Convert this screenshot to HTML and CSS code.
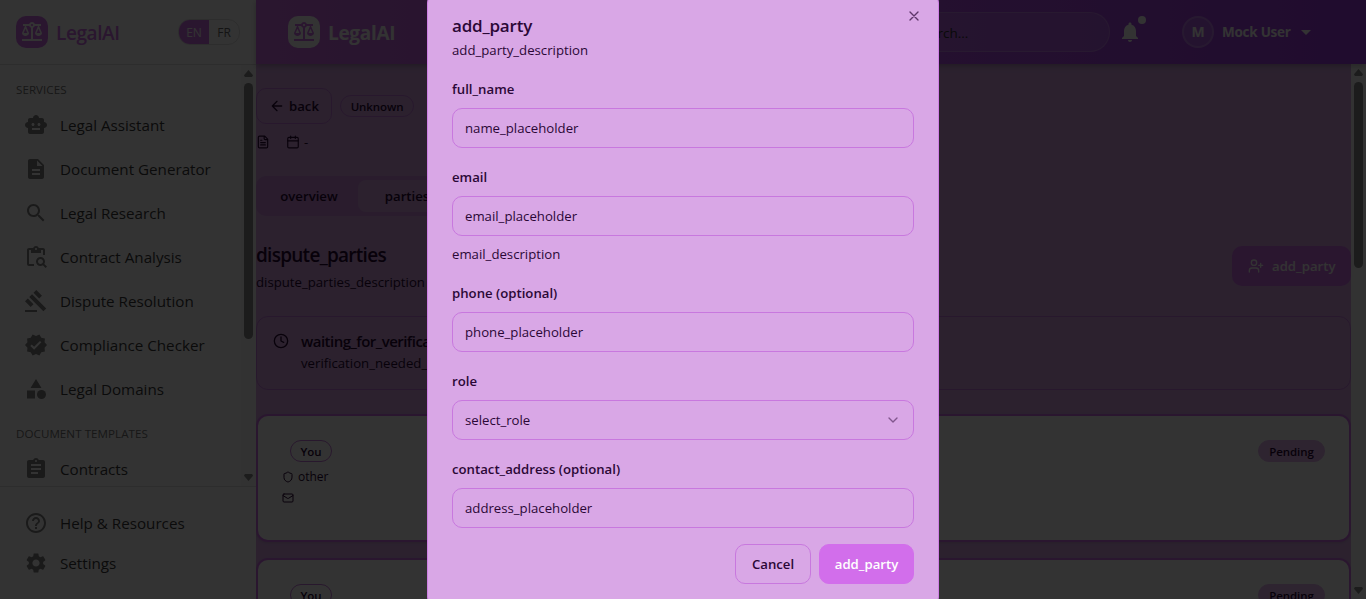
FILE: index.html
```html
<!DOCTYPE html>
<html lang="en">
<head>
<meta charset="utf-8">
<title>LegalAI</title>
<link rel="stylesheet" href="styles.css">
</head>
<body>
<svg class="defs" width="0" height="0">
  <symbol id="balance" viewBox="0 0 24 24"><path d="M13 7.83c.85-.3 1.53-.98 1.83-1.83H18l-3 7c0 1.66 1.57 3 3.5 3s3.5-1.34 3.5-3l-3-7h2V4h-6.17c-.41-1.17-1.52-2-2.83-2s-2.42.83-2.83 2H3v2h2l-3 7c0 1.66 1.57 3 3.5 3S9 14.66 9 13L6 6h3.17c.3.85.98 1.53 1.83 1.83V19H2v2h20v-2h-9zM20.37 13h-3.74l1.87-4.36zm-13 0H3.63L5.5 8.64zM12 6c-.55 0-1-.45-1-1s.45-1 1-1 1 .45 1 1-.45 1-1 1"/></symbol>
  <symbol id="shield" viewBox="0 0 24 24"><path d="M20 13c0 5-3.5 7.5-7.66 8.95a1 1 0 0 1-.67-.01C7.5 20.5 4 18 4 13V6a1 1 0 0 1 1-1c2 0 4.5-1.2 6.24-2.72a1.17 1.17 0 0 1 1.52 0C14.51 3.81 17 5 19 5a1 1 0 0 1 1 1z"/></symbol>
  <symbol id="mail" viewBox="0 0 24 24"><rect x="2" y="4" width="20" height="16" rx="2"/><path d="m22 7-8.97 5.7a1.94 1.94 0 0 1-2.06 0L2 7"/></symbol>
</svg>
<div class="app">
  <aside class="sidebar">
    <div class="side-head">
      <span class="logo"><svg class="mi"><use href="#balance"/></svg></span>
      <span class="brand">LegalAI</span>
      <div class="lang"><span class="on">EN</span><span>FR</span></div>
    </div>
    <div class="side-body">
      <nav class="side-nav">
        <h6 class="cap">SERVICES</h6>
        <a class="item"><svg class="mi" viewBox="0 0 24 24"><path d="M20 9V7c0-1.1-.9-2-2-2h-3c0-1.66-1.34-3-3-3S9 3.34 9 5H6c-1.1 0-2 .9-2 2v2c-1.66 0-3 1.34-3 3s1.34 3 3 3v4c0 1.1.9 2 2 2h12c1.1 0 2-.9 2-2v-4c1.66 0 3-1.34 3-3s-1.34-3-3-3M7.5 11.5c0-.83.67-1.5 1.5-1.5s1.5.67 1.5 1.5S9.83 13 9 13s-1.5-.67-1.5-1.5M16 17H8v-2h8zm-1-4c-.83 0-1.5-.67-1.5-1.5S14.17 10 15 10s1.5.67 1.5 1.5S15.83 13 15 13"/></svg><span>Legal Assistant</span></a>
        <a class="item"><svg class="mi" viewBox="0 0 24 24"><path d="M14 2H6c-1.1 0-1.99.9-1.99 2L4 20c0 1.1.89 2 1.99 2H18c1.1 0 2-.9 2-2V8zm2 16H8v-2h8zm0-4H8v-2h8zm-3-5V3.5L18.5 9z"/></svg><span>Document Generator</span></a>
        <a class="item"><svg class="mi" viewBox="0 0 24 24"><path d="M15.5 14h-.79l-.28-.27C15.41 12.59 16 11.11 16 9.5 16 5.91 13.09 3 9.5 3S3 5.91 3 9.5 5.91 16 9.5 16c1.61 0 3.09-.59 4.23-1.57l.27.28v.79l5 4.99L20.49 19zm-6 0C7.01 14 5 11.99 5 9.5S7.01 5 9.5 5 14 7.01 14 9.5 11.99 14 9.5 14"/></svg><span>Legal Research</span></a>
        <a class="item"><svg class="mi" viewBox="0 0 24 24"><path d="M5 5h2v3h10V5h2v5h2V5c0-1.1-.9-2-2-2h-4.18C14.4 1.84 13.3 1 12 1s-2.4.84-2.82 2H5c-1.1 0-2 .9-2 2v14c0 1.1.9 2 2 2h5v-2H5zm7-2c.55 0 1 .45 1 1s-.45 1-1 1-1-.45-1-1 .45-1 1-1m8.3 15.9c.4-.7.7-1.5.7-2.4 0-2.5-2-4.5-4.5-4.5S12 14 12 16.5s2 4.5 4.5 4.5c.9 0 1.7-.3 2.4-.7l2.7 2.7 1.4-1.4zm-3.8.1c-1.4 0-2.5-1.1-2.5-2.5s1.1-2.5 2.5-2.5 2.5 1.1 2.5 2.5-1.1 2.5-2.5 2.5"/></svg><span>Contract Analysis</span></a>
        <a class="item"><svg class="mi" viewBox="0 0 24 24"><path d="M1 21h12v2H1zM5.245 8.07l2.83-2.827 14.14 14.142-2.828 2.828zM12.317 1l5.657 5.656-2.83 2.83-5.654-5.66zM3.825 9.485l5.657 5.657-2.828 2.828-5.657-5.657z"/></svg><span>Dispute Resolution</span></a>
        <a class="item"><svg class="mi" viewBox="0 0 24 24"><path d="m23 12-2.44-2.79.34-3.69-3.61-.82-1.89-3.2L12 2.96 8.6 1.5 6.71 4.69 3.1 5.5l.34 3.7L1 12l2.44 2.79-.34 3.7 3.61.82L8.6 22.5l3.4-1.47 3.4 1.46 1.89-3.19 3.61-.82-.34-3.69zm-12.91 4.72-3.8-3.81 1.48-1.48 2.32 2.33 5.85-5.87 1.48 1.48z"/></svg><span>Compliance Checker</span></a>
        <a class="item"><svg class="mi" viewBox="0 0 24 24"><path d="m12 2-5.5 9h11zM3 13.5h8v8H3z"/><circle cx="17.5" cy="17.5" r="4.5"/></svg><span>Legal Domains</span></a>
        <h6 class="cap">DOCUMENT TEMPLATES</h6>
        <a class="item"><svg class="mi" viewBox="0 0 24 24"><path d="M19 3h-4.18C14.4 1.84 13.3 1 12 1s-2.4.84-2.82 2H5c-1.1 0-2 .9-2 2v14c0 1.1.9 2 2 2h14c1.1 0 2-.9 2-2V5c0-1.1-.9-2-2-2m-7 0c.55 0 1 .45 1 1s-.45 1-1 1-1-.45-1-1 .45-1 1-1m2 14H7v-2h7zm3-4H7v-2h10zm0-4H7V7h10z"/></svg><span>Contracts</span></a>
      </nav>
      <div class="bar"><i class="up"></i><i class="thumb"></i><i class="down"></i></div>
    </div>
    <div class="side-foot">
      <a class="item"><svg class="mi" viewBox="0 0 24 24"><path d="M11 18h2v-2h-2zm1-16C6.48 2 2 6.48 2 12s4.48 10 10 10 10-4.48 10-10S17.52 2 12 2m0 18c-4.41 0-8-3.59-8-8s3.59-8 8-8 8 3.59 8 8-3.59 8-8 8m0-14c-2.21 0-4 1.79-4 4h2c0-1.1.9-2 2-2s2 .9 2 2c0 2-3 1.75-3 5h2c0-2.25 3-2.5 3-5 0-2.21-1.79-4-4-4"/></svg><span>Help &amp; Resources</span></a>
      <a class="item"><svg class="mi" viewBox="0 0 24 24"><path d="M19.14 12.94c.04-.3.06-.61.06-.94 0-.32-.02-.64-.07-.94l2.03-1.58c.18-.14.23-.41.12-.61l-1.92-3.32c-.12-.22-.37-.29-.59-.22l-2.39.96c-.5-.38-1.03-.7-1.62-.94l-.36-2.54c-.04-.24-.24-.41-.48-.41h-3.84c-.24 0-.43.17-.47.41l-.36 2.54c-.59.24-1.13.57-1.62.94l-2.39-.96c-.22-.08-.47 0-.59.22L2.74 8.87c-.12.21-.08.47.12.61l2.03 1.58c-.05.3-.09.63-.09.94s.02.64.07.94l-2.03 1.58c-.18.14-.23.41-.12.61l1.92 3.32c.12.22.37.29.59.22l2.39-.96c.5.38 1.03.7 1.62.94l.36 2.54c.05.24.24.41.48.41h3.84c.24 0 .44-.17.47-.41l.36-2.54c.59-.24 1.13-.56 1.62-.94l2.39.96c.22.08.47 0 .59-.22l1.92-3.32c.12-.22.07-.47-.12-.61zM12 15.6c-1.98 0-3.6-1.62-3.6-3.6s1.62-3.6 3.6-3.6 3.6 1.62 3.6 3.6-1.62 3.6-3.6 3.6"/></svg><span>Settings</span></a>
    </div>
  </aside>
  <div class="page">
    <header class="top">
      <span class="logo light"><svg class="mi"><use href="#balance"/></svg></span>
      <span class="brand light">LegalAI</span>
      <div class="search"><span>Search...</span></div>
      <div class="bell"><svg class="mi" viewBox="0 0 24 24"><path d="M12 22c1.1 0 2-.9 2-2h-4c0 1.1.89 2 2 2m6-6v-5c0-3.07-1.64-5.64-4.5-6.32V4c0-.83-.67-1.5-1.5-1.5s-1.5.67-1.5 1.5v.68C7.63 5.36 6 7.92 6 11v5l-2 2v1h16v-1z"/></svg><i class="dot"></i></div>
      <span class="avatar">M</span>
      <span class="user">Mock User</span>
      <svg class="mi caret" viewBox="0 0 24 24"><path d="m7 10 5 5 5-5z"/></svg>
    </header>
    <div class="body">
      <main class="content">
        <div class="crumbs">
          <span class="back"><svg class="lu s16" viewBox="0 0 24 24"><path d="m12 19-7-7 7-7M19 12H5"/></svg><span>back</span></span>
          <span class="badge unk">Unknown</span>
        </div>
        <div class="meta">
          <svg class="lu s14" viewBox="0 0 24 24"><path d="M15 2H6a2 2 0 0 0-2 2v16a2 2 0 0 0 2 2h12a2 2 0 0 0 2-2V7ZM14 2v4a2 2 0 0 0 2 2h4M10 9H8M16 13H8M16 17H8"/></svg>
          <svg class="lu s14" viewBox="0 0 24 24"><path d="M8 2v4M16 2v4M3 10h18"/><rect x="3" y="4" width="18" height="18" rx="2"/></svg>
          <span>-</span>
        </div>
        <div class="tabs"><span class="tab">overview</span><span class="tab active">parties</span></div>
        <div class="sect">
          <div><h2>dispute_parties</h2><p>dispute_parties_description</p></div>
          <span class="add"><svg class="lu s16" viewBox="0 0 24 24"><path d="M16 21v-2a4 4 0 0 0-4-4H6a4 4 0 0 0-4 4v2"/><circle cx="9" cy="7" r="4"/><path d="M19 8v6M22 11h-6"/></svg><span>add_party</span></span>
        </div>
        <div class="alert">
          <svg class="lu s16" viewBox="0 0 24 24"><circle cx="12" cy="12" r="10"/><path d="M12 6v6l4 2"/></svg>
          <div><h5>waiting_for_verification</h5><p>verification_needed_description</p></div>
        </div>
        <div class="card">
          <div class="card-l"><span class="badge you">You</span>
            <div class="row"><svg class="lu s12"><use href="#shield"/></svg><span>other</span></div>
            <div class="row"><svg class="lu s12"><use href="#mail"/></svg></div>
          </div>
          <span class="badge pend">Pending</span>
        </div>
        <div class="card">
          <div class="card-l"><span class="badge you">You</span></div>
          <span class="badge pend">Pending</span>
        </div>
      </main>
      <div class="bar main-bar"><i class="up"></i><i class="thumb"></i><i class="down"></i></div>
    </div>
  </div>
</div>
<div class="overlay">
  <div class="modal">
    <svg class="lu close" viewBox="0 0 24 24"><path d="M18 6 6 18M6 6l12 12"/></svg>
    <h2 class="m-title">add_party</h2>
    <p class="m-text">add_party_description</p>
    <div class="form">
      <div class="field"><label>full_name</label><div class="input">name_placeholder</div></div>
      <div class="field"><label>email</label><div class="input">email_placeholder</div><p class="m-text hint">email_description</p></div>
      <div class="field"><label>phone (optional)</label><div class="input">phone_placeholder</div></div>
      <div class="field"><label>role</label><div class="input select"><span>select_role</span><svg class="lu s16" viewBox="0 0 24 24"><path d="m6 9 6 6 6-6"/></svg></div></div>
      <div class="field"><label>contact_address (optional)</label><div class="input">address_placeholder</div></div>
      <div class="actions"><span class="btn">Cancel</span><span class="btn primary">add_party</span></div>
    </div>
  </div>
</div>
</body>
</html>
```
FILE: styles.css
```css
* { box-sizing: border-box; margin: 0; padding: 0; }
:root { --bg: #d9a7e6; --line: #c878de; --primary: #d26eeb; --ink: #2b0736; }
body { width: 1366px; height: 599px; overflow: hidden; font: 13.2px/20px "Open Sans", "Noto Sans", sans-serif; color: var(--ink); }
.defs { position: absolute; }
svg { flex: none; }
.mi { width: 24px; height: 24px; fill: currentColor; }
.lu { fill: none; stroke: currentColor; stroke-width: 2; stroke-linecap: round; stroke-linejoin: round; }
.s16 { width: 16px; height: 16px; }
.s14 { width: 14px; height: 14px; }
.s12 { width: 12px; height: 12px; }

.app { display: flex; width: 1366px; height: 599px; }
.sidebar { width: 256px; height: 599px; display: flex; flex-direction: column; background: #fff; }
.side-head { display: flex; align-items: center; height: 65px; padding: 0 16px 1px; border-bottom: 1px solid #e0e0e0; }
.logo { width: 32px; height: 32px; border-radius: 10px; background: #d26eeb; color: #fff; display: flex; align-items: center; justify-content: center; flex: none; }
.brand { margin-left: 8px; padding-top: 2px; font-size: 19px; font-weight: 600; letter-spacing: -.4px; color: #d26eeb; }
.lang { margin-left: auto; display: flex; width: 62px; height: 26px; border: 1px solid #e0e0e0; border-radius: 12px; overflow: hidden; font-size: 12px; line-height: 25px; color: #666; }
.lang span { flex: 1; text-align: center; }
.lang .on { background: #d26eeb; color: #fff; }
.side-body { display: flex; height: 421px; overflow: hidden; }
.side-nav { flex: 1; padding-top: 9px; }
.cap { height: 30px; padding: 0 16px; font-size: 11.6px; line-height: 31px; font-weight: 500; letter-spacing: .05px; color: #757575; }
.item { display: flex; align-items: center; height: 44px; padding-left: 24px; gap: 12px; font-size: 15.2px; color: #3a3a3a; }
.item svg { color: #808080; }
.item + .cap { margin-top: 7px; }
.cap + .item { margin-top: -1px; }
.side-foot { flex: 1; padding-top: 16px; border-top: 1px solid #e0e0e0; }
.side-foot .item { height: 40px; }
.bar { width: 15px; background: #fafafa; display: flex; flex-direction: column; align-items: center; padding: 5px 0; }
.bar i { display: block; flex: none; }
.up, .down { width: 9px; height: 7px; background: #8b8b8b; }
.up { clip-path: polygon(50% 0, 100% 75%, 90% 100%, 10% 100%, 0 75%); }
.down { margin-top: auto; clip-path: polygon(50% 100%, 100% 25%, 90% 0, 10% 0, 0 25%); }
.thumb { width: 9px; height: 256px; margin-top: 6px; border-radius: 5px; background: #8b8b8b; }

.page { flex: 1; display: flex; flex-direction: column; background: var(--bg); }
.top { height: 64px; display: flex; align-items: center; padding: 0 48px 0 32px; background: linear-gradient(90deg, #d26eeb, #a03ce6); color: #fff; box-shadow: 0 2px 6px rgba(0,0,0,.25); z-index: 1; }
.logo.light { background: #fff; color: #d26eeb; }
.brand.light { color: #fff; font-weight: 700; letter-spacing: -.3px; }
.search { margin-left: auto; width: 400px; height: 40px; border-radius: 20px; border: 1px solid rgba(255,255,255,.2); background: rgba(255,255,255,.12); display: flex; align-items: center; padding: 2px 0 0 204px; color: #333; font-size: 13.5px; }
.bell { position: relative; margin-left: 8px; height: 24px; }
.dot { position: absolute; left: 20px; top: -4px; width: 8px; height: 8px; border-radius: 50%; background: #fff; }
.avatar { margin-left: 40px; width: 32px; height: 32px; border-radius: 50%; border: 2px solid rgba(255,255,255,.2); background: rgba(255,255,255,.15); text-align: center; line-height: 28px; font-weight: 700; font-size: 14px; }
.user { margin-left: 8px; width: 72px; font-weight: 700; font-size: 13.5px; letter-spacing: -.25px; white-space: nowrap; }
.body { flex: 1; display: flex; min-height: 0; }
.content { flex: 1; overflow: hidden; padding-top: 24px; }
.main-bar .thumb { height: 186px; }
.crumbs { display: flex; align-items: center; gap: 8px; height: 36px; }
.back { width: 76px; height: 36px; border: 1px solid var(--line); border-radius: 10px; display: flex; align-items: center; gap: 4px; padding-left: 12px; font-weight: 600; }
.badge { height: 22px; border: 1px solid var(--line); border-radius: 11px; font-size: 11.5px; line-height: 21px; font-weight: 600; letter-spacing: -.1px; text-align: center; }
.unk { width: 74px; }
.meta { display: flex; align-items: center; height: 20px; margin-top: 8px; }
.meta svg + svg { margin-left: 16px; }
.meta span { margin-left: 4px; }
.tabs { display: flex; margin-top: 24px; width: 500px; height: 40px; padding: 4px; border-radius: 10px; background: #cf8ce0; font-weight: 600; line-height: 32px; }
.tab { width: 98px; text-align: center; border-radius: 8px; }
.tab.active { background: var(--bg); }
.sect { display: flex; justify-content: space-between; align-items: center; height: 52px; margin-top: 24px; }
.sect h2 { font-size: 19px; line-height: 30px; font-weight: 600; letter-spacing: -.73px; }
.sect p { margin-top: 2px; }
.add { width: 119px; height: 40px; border-radius: 10px; background: #d26eeb; color: #fff; display: flex; align-items: center; padding-left: 16px; gap: 8px; font-weight: 600; }
.alert { display: flex; gap: 12px; height: 74px; margin-top: 24px; border: 1px solid var(--line); border-radius: 12px; padding: 16px; }
.alert h5 { font-size: 15px; line-height: 16px; font-weight: 600; letter-spacing: -.52px; }
.alert p { margin-top: 4px; }
.card { display: flex; justify-content: space-between; margin-top: 24px; height: 128px; border: 2px solid #d26eeb; border-radius: 12px; background: #fff; padding: 24px; box-shadow: 0 1px 3px rgba(0,0,0,.1); }
.card + .card { margin-top: 16px; }
.badge.you { display: block; width: 42px; margin-left: 8px; }
.row { display: flex; align-items: center; gap: 4px; height: 21px; font-size: 12px; }
.badge.you + .row { margin-top: 4px; }
.pend { width: 67px; background: #e4b4f0; border-color: #e4b4f0; }

.overlay { position: fixed; inset: 0; z-index: 10; background: rgba(0,0,0,.8); }
.modal { position: absolute; left: 427px; top: -9px; width: 512px; height: 618px; padding: 24px; border: 1px solid #cf7fe4; border-radius: 12px; background: var(--bg); }
.close { position: absolute; right: 16px; top: 16px; width: 16px; height: 16px; opacity: .7; }
.m-title { font-size: 17px; line-height: 20px; height: 18px; font-weight: 600; letter-spacing: -.2px; }
.m-text { margin-top: 6px; }
.form { display: grid; gap: 16px; margin-top: 16px; }
.field label { display: block; height: 24px; line-height: 27px; font-weight: 600; }
.input { height: 40px; margin-top: 8px; border: 1px solid var(--line); border-radius: 10px; padding: 0 12px; line-height: 38px; }
.select { display: flex; align-items: center; justify-content: space-between; }
.select svg { opacity: .5; }
.hint { margin-top: 8px; }
.actions { display: flex; justify-content: flex-end; gap: 8px; }
.btn { width: 76px; height: 40px; border: 1px solid var(--line); border-radius: 10px; text-align: center; line-height: 38px; font-weight: 600; }
.btn.primary { width: 95px; background: var(--primary); border-color: var(--primary); color: #fff; }
```
